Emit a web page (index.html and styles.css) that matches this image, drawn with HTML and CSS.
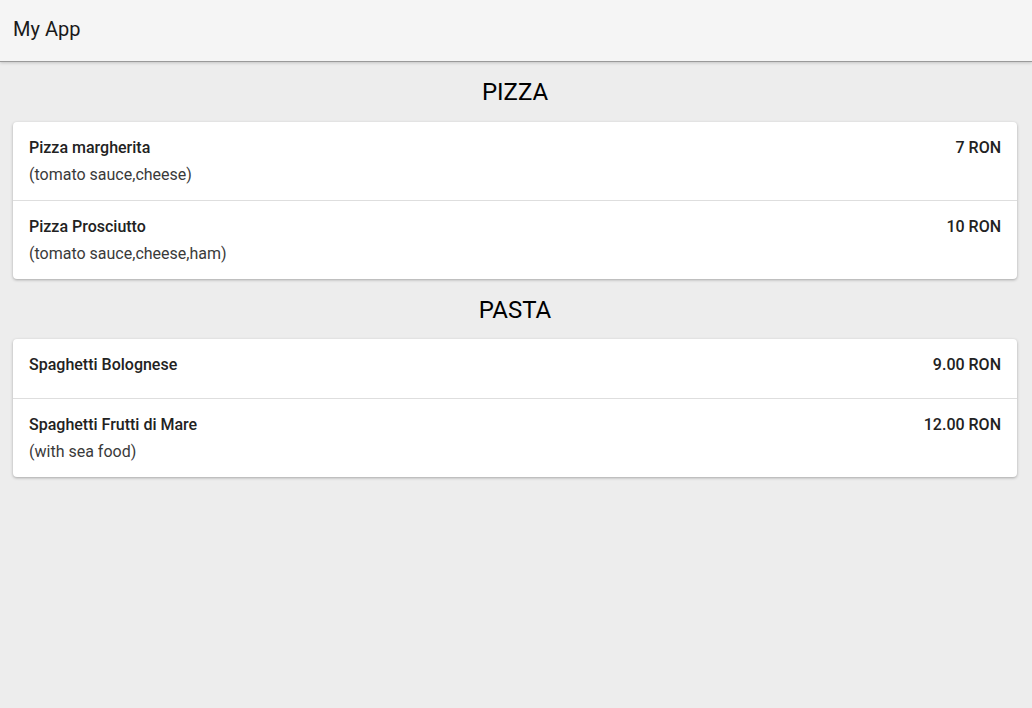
FILE: index.html
```html
<!DOCTYPE html>
<html>
<head>
<meta charset="utf-8">
<link rel="stylesheet" href="styles.css">
</head>
<body>
<header class="toolbar"><span class="title">My App</span></header>
<main class="content">
  <section class="category">
    <h2 class="cat-title">PIZZA</h2>
    <div class="card">
      <div class="item">
        <div class="info"><div class="name">Pizza margherita</div><div class="desc">(tomato sauce,cheese)</div></div>
        <div class="price">7 RON</div>
      </div>
      <div class="item">
        <div class="info"><div class="name">Pizza Prosciutto</div><div class="desc">(tomato sauce,cheese,ham)</div></div>
        <div class="price">10 RON</div>
      </div>
    </div>
  </section>
  <section class="category">
    <h2 class="cat-title">PASTA</h2>
    <div class="card">
      <div class="item">
        <div class="info"><div class="name">Spaghetti Bolognese</div></div>
        <div class="price">9.00 RON</div>
      </div>
      <div class="item">
        <div class="info"><div class="name">Spaghetti Frutti di Mare</div><div class="desc">(with sea food)</div></div>
        <div class="price">12.00 RON</div>
      </div>
    </div>
  </section>
</main>
</body>
</html>
```
FILE: styles.css
```css
html, body {
  margin: 0;
  padding: 0;
  height: 100%;
}
body {
  background: #ededed;
  font-family: Roboto, "Liberation Sans", Arial, sans-serif;
  color: #222;
}
.toolbar {
  height: 61px;
  background: #f5f5f5;
  display: flex;
  align-items: center;
  padding: 0 13px;
  box-shadow: 0 1px 0 #9a9a9a, 0 2px 3px rgba(0,0,0,0.18);
  position: relative;
}
.title {
  font-size: 20px;
  font-weight: 400;
  color: #1a1a1a;
  margin-top: -3px;
}
.content {
  padding: 0 15px 0 13px;
}
.category {
  display: flex;
  flex-direction: column;
}
.cat-title {
  margin: 0;
  text-align: center;
  font-size: 24px;
  font-weight: 400;
  color: #000;
  line-height: 30px;
  padding: 16px 0 15px;
}
.category + .category .cat-title {
  padding-bottom: 14px;
}
.card {
  background: #fff;
  border-radius: 4px;
  box-shadow: 0 1px 3px rgba(0,0,0,0.3);
}
.item {
  display: flex;
  justify-content: space-between;
  padding: 15px 16px 22px;
  border-bottom: 1px solid #dedede;
}
.item:last-child {
  border-bottom: none;
}
.name {
  font-size: 16px;
  font-weight: 500;
  line-height: 22px;
  color: #222;
}
.desc {
  font-size: 16px;
  line-height: 22px;
  margin-top: 5px;
  margin-bottom: -8px;
  color: #3a3a3a;
}
.price {
  font-size: 16px;
  font-weight: 500;
  line-height: 22px;
  color: #222;
}
```
